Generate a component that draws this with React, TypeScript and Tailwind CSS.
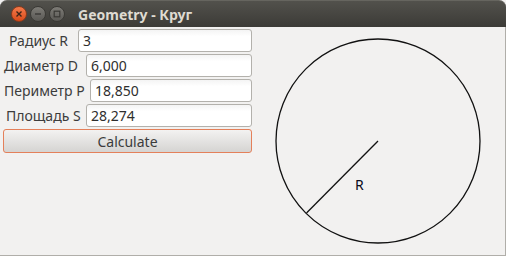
import React from "react";

const font = { fontFamily: '"Noto Sans", "DejaVu Sans", sans-serif' };

function Row({ label, value, labelW, pl }: { label: string; value: string; labelW: string; pl: string }) {
  return (
    <div className="flex h-[23px] items-center">
      <div className={`${labelW} ${pl} shrink-0 text-[14px] leading-none text-[#3c3c3c] whitespace-nowrap`}>{label}</div>
      <div className="flex h-[23px] flex-1 items-center rounded-[3px] border border-[#b3b1ac] bg-gradient-to-b from-[#f4f4f4] to-white to-[30%] pl-[4px] text-[14px] text-[#2e2e2e]">
        {value}
      </div>
    </div>
  );
}

export default function App() {
  return (
    <div className="w-[506px] h-[256px] overflow-hidden bg-[#f2f1f0]" style={font}>
      <div className="relative flex h-[27px] items-center rounded-t-[7px] border-t border-[#66655f] bg-gradient-to-b from-[#52514c] to-[#3c3b37]">
        <div className="ml-[11px] flex items-center gap-[3px]">
          <div className="flex h-[16px] w-[16px] items-center justify-center rounded-full border border-[#8a3a1c] bg-gradient-to-b from-[#f47a4a] to-[#d94a18]">
            <svg width="8" height="8" viewBox="0 0 8 8"><path d="M1.5 1.5 L6.5 6.5 M6.5 1.5 L1.5 6.5" stroke="#3c2418" strokeWidth="1.4" /></svg>
          </div>
          <div className="flex h-[16px] w-[16px] items-center justify-center rounded-full border border-[#3a3935] bg-gradient-to-b from-[#7d7b76] to-[#5a5955]">
            <svg width="8" height="8" viewBox="0 0 8 8"><path d="M1 4 L7 4" stroke="#3a3935" strokeWidth="1.4" /></svg>
          </div>
          <div className="flex h-[16px] w-[16px] items-center justify-center rounded-full border border-[#3a3935] bg-gradient-to-b from-[#7d7b76] to-[#5a5955]">
            <svg width="8" height="8" viewBox="0 0 8 8"><rect x="1.2" y="1.2" width="5.6" height="5.6" fill="none" stroke="#3a3935" strokeWidth="1.2" /></svg>
          </div>
        </div>
        <div className="ml-[13px] text-[14px] font-bold text-[#dfdbd2]">Geometry - Круг</div>
      </div>
      <div className="flex h-[229px] border-r border-b border-[#b0aea9]">
        <div className="flex w-[255px] flex-col gap-[2px] pt-[2px] pl-[3px] pr-[3px]">
          <Row label="Радиус R" value="3" labelW="w-[75px]" pl="pl-[6px]" />
          <Row label="Диаметр D" value="6,000" labelW="w-[83px]" pl="pl-[1px]" />
          <Row label="Периметр P" value="18,850" labelW="w-[87px]" pl="pl-[1px]" />
          <Row label="Площадь S" value="28,274" labelW="w-[83px]" pl="pl-[3px]" />
          <div className="flex h-[24px] items-center justify-center rounded-[3px] border border-[#e4805a] bg-gradient-to-b from-[#f3f2f1] to-[#d5d4d2] text-[14px] text-[#3c3c3c]">
            Calculate
          </div>
        </div>
        <div className="flex-1">
          <svg width="250" height="228" viewBox="0 0 250 228">
            <circle cx="123" cy="114" r="102" fill="none" stroke="#111" strokeWidth="1.3" />
            <line x1="123" y1="114" x2="51.5" y2="186" stroke="#111" strokeWidth="1.3" />
            <text x="100" y="163" fontSize="14" fill="#0a0a20" style={font}>R</text>
          </svg>
        </div>
      </div>
    </div>
  );
}
